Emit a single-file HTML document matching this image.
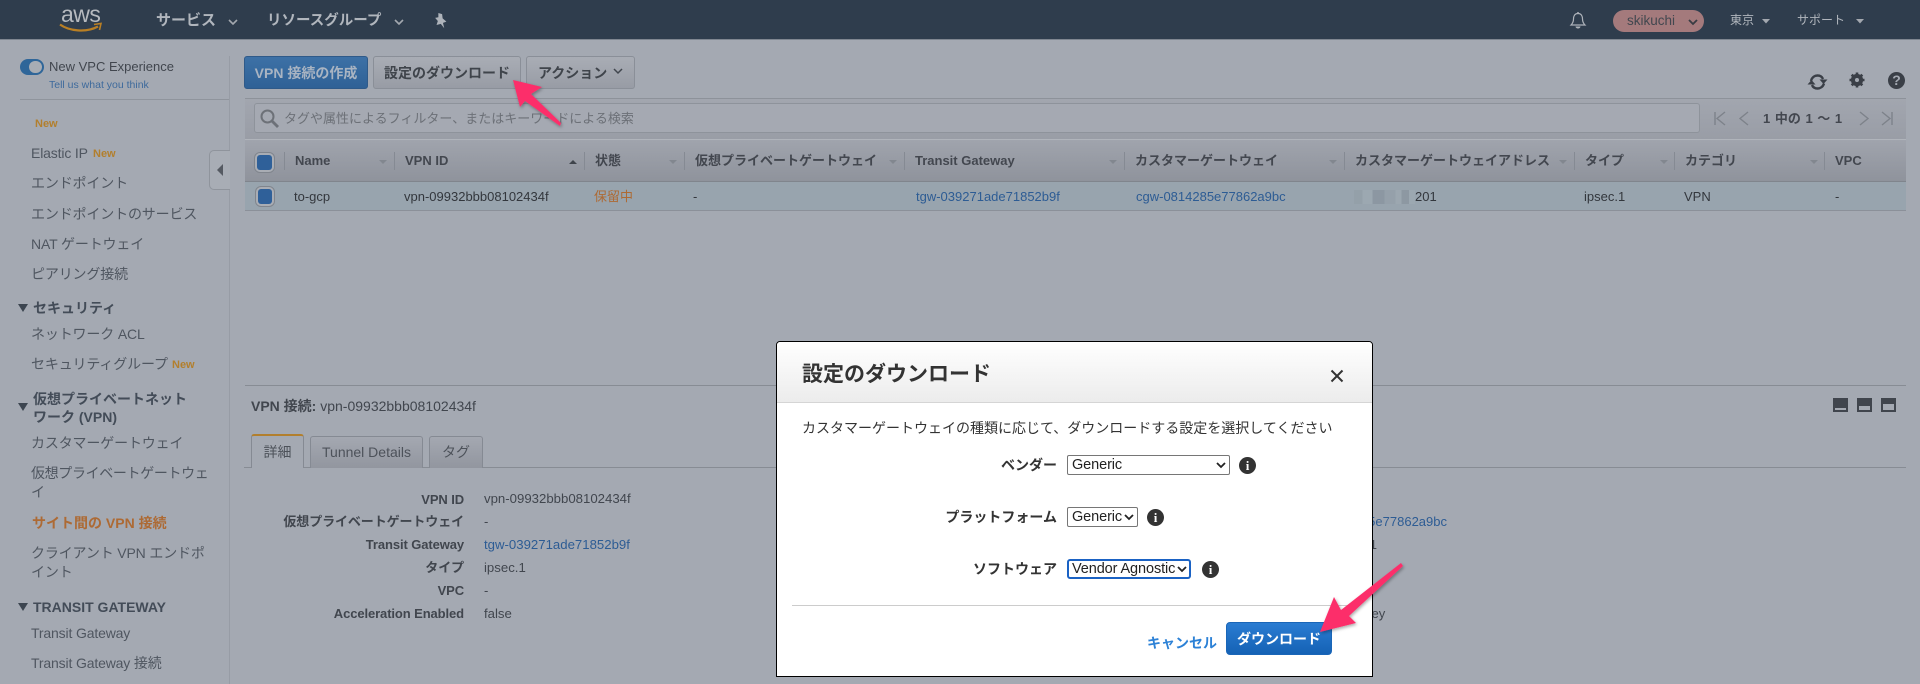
<!DOCTYPE html>
<html lang="ja">
<head>
<meta charset="utf-8">
<title>VPN</title>
<style>
*{box-sizing:border-box}
html,body{margin:0;padding:0;width:1920px;height:684px;overflow:hidden;background:#a4a9b2}
body{position:relative;font-family:"Liberation Sans","Noto Sans CJK JP",sans-serif;font-size:13px;color:#41464e}
.t{position:absolute;white-space:nowrap;line-height:20px;height:20px}
.b{font-weight:700}
.a{position:absolute}
.r{text-align:right;right:1456px;letter-spacing:-.1px}
.side{font-size:14px;color:#4f5660;letter-spacing:-.15px}
.sh{font-size:14px;font-weight:700;color:#434c58}
.new{font-size:11px;font-weight:700;color:#b27f2d}
.th{font-weight:700;color:#43474f}
.sep{position:absolute;top:152px;width:1px;height:18px;background:#858a93}
.car{position:absolute;top:160px;width:0;height:0;border-left:4px solid transparent;border-right:4px solid transparent;border-top:4px solid #82878f}
.td{color:#33373d}
.lnk{color:#2d5c94}
.btn{position:absolute;top:56px;height:33px;border-radius:3px;border:1px solid #8a8f98;background:linear-gradient(#a9adb5,#989ca5);text-align:center;line-height:32px;font-size:14px;font-weight:700;color:#3f444b;white-space:nowrap}
.tri{position:absolute;left:18px;width:0;height:0;border-left:5px solid transparent;border-right:5px solid transparent;border-top:8px solid #3c4550}
.cb{position:absolute;width:15px;height:15px;border-radius:3px;background:#2f6099;box-shadow:0 0 0 2px #a9adb4,0 0 0 3px #80858d}
.tab{position:absolute;border:1px solid #858a93;border-bottom:none;border-radius:3px 3px 0 0;background:linear-gradient(#a4a8b1,#92969f);color:#4d525a;text-align:center;font-size:14px}
.nav{color:#b1b6bd;white-space:nowrap}
.sel{position:absolute;background:#fff;border:1px solid #767676;border-radius:2px;font-size:14.5px;color:#222;line-height:18px;padding-left:4px;white-space:nowrap;overflow:hidden;letter-spacing:-.1px}
.sel svg{position:absolute;right:3px;top:6px}
.info{position:absolute;width:17px;height:17px;border-radius:50%;background:#333;color:#fff;font:700 13px/17px "Liberation Serif",serif;text-align:center}
</style>
</head>
<body>
<!-- navbar -->
<div class="a" style="left:0;top:0;width:1920px;height:40px;background:#2f3d4d;border-bottom:1px solid #7f8690"></div>
<div class="t" style="left:61px;top:1px;font-size:23px;line-height:26px;height:26px;color:#b6babf;letter-spacing:-.5px">aws</div>
<svg class="a" style="left:59px;top:22px" width="44" height="12" viewBox="0 0 44 12"><path d="M1 2.500C10 9 27 11 39 4.500" fill="none" stroke="#b97f24" stroke-width="2.200"/><path d="M35 2.500L42 1.500L40.500 8" fill="none" stroke="#b97f24" stroke-width="1.600"/></svg>
<div class="t nav b" style="left:156px;top:11px;font-size:15px">サービス</div>
<svg class="a" style="left:228px;top:19px" width="10" height="7"><path d="M1 1l4 4 4-4" fill="none" stroke="#a3a8af" stroke-width="1.600"/></svg>
<div class="t nav b" style="left:267px;top:11px;font-size:14.5px">リソースグループ</div>
<svg class="a" style="left:394px;top:19px" width="10" height="7"><path d="M1 1l4 4 4-4" fill="none" stroke="#a3a8af" stroke-width="1.600"/></svg>
<svg class="a" style="left:433px;top:12px" width="15" height="17" viewBox="0 0 14 15"><path d="M5 .5l3.500 1 .5 4 3.500 3-3.200 1.200 1.200 5-3.200-4-4 1 1.200-3.700L2 5l3-.5z" fill="#aeb3ba"/></svg>
<svg class="a" style="left:1569px;top:11px" width="18" height="19" viewBox="0 0 18 19"><path d="M9 2.500c-3.500 0-4.500 3-4.500 5.500 0 3-1 4.500-2.500 6h14c-1.500-1.500-2.500-3-2.500-6 0-2.500-1-5.500-4.500-5.500z" fill="none" stroke="#aeb3ba" stroke-width="1.200"/><circle cx="9" cy="2" r="1" fill="#aeb3ba"/><path d="M6.500 15.500a2.500 2 0 0 0 5 0z" fill="#aeb3ba"/></svg>
<div class="a" style="left:1613px;top:10px;width:91px;height:22px;border-radius:11px;background:#a47a7c"></div>
<div class="t" style="left:1627px;top:11px;font-size:13.5px;color:#42474f">skikuchi</div>
<svg class="a" style="left:1688px;top:19px" width="10" height="7"><path d="M1 1l4 4 4-4" fill="none" stroke="#383c43" stroke-width="1.800"/></svg>
<div class="t nav" style="left:1730px;top:10px;font-size:12px">東京</div>
<svg class="a" style="left:1762px;top:19px" width="8" height="5"><path d="M0 0h8L4 4.500z" fill="#a3a8af"/></svg>
<div class="t nav" style="left:1797px;top:10px;font-size:12px">サポート</div>
<svg class="a" style="left:1856px;top:19px" width="8" height="5"><path d="M0 0h8L4 4.500z" fill="#a3a8af"/></svg>

<!-- sidebar -->
<div class="a" style="left:229px;top:56px;width:1px;height:628px;background:#979ca5"></div>
<div class="a" style="left:20px;top:59px;width:24px;height:16px;border-radius:8px;background:#2f6699"></div>
<div class="a" style="left:29px;top:61px;width:13px;height:12px;border-radius:6px;background:#a8adb4"></div>
<div class="t" style="left:49px;top:57px;font-size:13px;color:#41464e">New VPC Experience</div>
<div class="t" style="left:49px;top:75px;font-size:10.500px;color:#3e6a9c">Tell us what you think</div>
<div class="a" style="left:20px;top:99px;width:209px;height:1px;background:#8f949c"></div>
<div class="t new" style="left:35px;top:114px">New</div>
<div class="t side" style="left:31px;top:143px">Elastic IP</div><div class="t new" style="left:93px;top:144px">New</div>
<div class="t side" style="left:31px;top:173px">エンドポイント</div>
<div class="t side" style="left:31px;top:204px">エンドポイントのサービス</div>
<div class="t side" style="left:31px;top:234px">NAT ゲートウェイ</div>
<div class="t side" style="left:31px;top:264px">ピアリング接続</div>
<div class="tri" style="top:304px"></div><div class="t sh" style="left:33px;top:298px">セキュリティ</div>
<div class="t side" style="left:31px;top:324px">ネットワーク ACL</div>
<div class="t side" style="left:31px;top:354px">セキュリティグループ</div><div class="t new" style="left:172px;top:355px">New</div>
<div class="tri" style="top:403px"></div><div class="t sh" style="left:33px;top:389px">仮想プライベートネット</div>
<div class="t sh" style="left:33px;top:407px">ワーク (VPN)</div>
<div class="t side" style="left:31px;top:433px">カスタマーゲートウェイ</div>
<div class="t side" style="left:31px;top:463px;letter-spacing:-.35px">仮想プライベートゲートウェ</div>
<div class="t side" style="left:31px;top:482px">イ</div>
<div class="t b" style="left:32px;top:513px;font-size:14px;color:#ad6a34">サイト間の VPN 接続</div>
<div class="t side" style="left:31px;top:543px">クライアント VPN エンドポ</div>
<div class="t side" style="left:31px;top:562px">イント</div>
<div class="tri" style="top:603px"></div><div class="t sh" style="left:33px;top:597px">TRANSIT GATEWAY</div>
<div class="t side" style="left:31px;top:623px">Transit Gateway</div>
<div class="t side" style="left:31px;top:653px">Transit Gateway 接続</div>
<div class="a" style="left:209px;top:150px;width:21px;height:40px;background:#a8adb5;border:1px solid #8f949c;border-right:none;border-radius:5px 0 0 5px"></div>
<div class="a" style="left:217px;top:164px;width:0;height:0;border-top:6px solid transparent;border-bottom:6px solid transparent;border-right:6px solid #555a62"></div>

<!-- toolbar -->
<div class="btn" style="left:244px;width:124px;background:linear-gradient(#3d71a6,#2f6196);border-color:#2f5a89;color:#a9b4c2">VPN 接続の作成</div>
<div class="btn" style="left:373px;width:148px">設定のダウンロード</div>
<div class="btn" style="left:526px;width:109px;text-align:left;padding-left:11px">アクション</div>
<svg class="a" style="left:613px;top:68px" width="10" height="7"><path d="M1 1l4 4 4-4" fill="none" stroke="#41464e" stroke-width="1.500"/></svg>
<svg class="a" style="left:1807px;top:74px" width="21" height="16" viewBox="0 0 21 16"><path d="M4 7C5 3 8 1.500 10.500 1.500c2.500 0 4.500 1 5.500 3.500" fill="none" stroke="#3a3f47" stroke-width="2.400"/><path d="M12.500 5.500h8l-4 4.500z" fill="#3a3f47"/><path d="M17 9.500C16 13 13 14.500 10.500 14.500 8 14.500 6 13.500 5 11" fill="none" stroke="#3a3f47" stroke-width="2.400"/><path d="M.5 10.500h8l-4-4.500z" fill="#3a3f47"/></svg>
<svg class="a" style="left:1849px;top:72px" width="16" height="16" viewBox="0 0 16 16"><circle cx="8" cy="8" r="4.500" fill="none" stroke="#3a3f47" stroke-width="3.200"/><path d="M8 .5v15M.5 8h15M2.700 2.700l10.600 10.600M13.300 2.700L2.700 13.300" stroke="#3a3f47" stroke-width="2.600"/><circle cx="8" cy="8" r="2" fill="#a4a9b2"/></svg>
<div class="a" style="left:1888px;top:72px;width:17px;height:17px;border-radius:50%;background:#3a3f47;color:#a4a9b2;font:700 14px/17px 'Liberation Sans',sans-serif;text-align:center">?</div>

<!-- filter row -->
<div class="a" style="left:245px;top:98px;width:1661px;height:42px;background:linear-gradient(#a2a6af,#999da6);border-top:1px solid #8d929a;border-bottom:1px solid #b0b4bb"></div>
<div class="a" style="left:254px;top:103px;width:1446px;height:30px;background:#a5a9b2;border:1px solid #8e939b;border-radius:3px"></div>
<svg class="a" style="left:259px;top:108px" width="21" height="21" viewBox="0 0 21 21"><circle cx="8.500" cy="8.500" r="6" fill="none" stroke="#6d7178" stroke-width="2"/><path d="M13 13l6 6" stroke="#6d7178" stroke-width="2.800"/></svg>
<div class="t" style="left:284px;top:109px;font-size:13px;color:#6c7077">タグや属性によるフィルター、またはキーワードによる検索</div>
<svg class="a" style="left:1713px;top:109px" width="186" height="20" viewBox="0 0 186 20" fill="none" stroke="#7d828a" stroke-width="1.400"><path d="M2 3v13M12 3L4 9.500l8 6.500M35 3l-8 6.500 8 6.500M147 3l8 6.500-8 6.500M169 3l8 6.500-8 6.500M179 3v13"/></svg>
<div class="t b" style="left:1763px;top:109px;font-size:13px;color:#43474f;word-spacing:1px">1 中の 1 〜 1</div>

<!-- table header -->
<div class="a" style="left:245px;top:140px;width:1661px;height:42px;background:linear-gradient(#a0a4ad,#8f939c);border-bottom:1px solid #80858d"></div>
<div class="cb" style="left:257px;top:155px"></div>
<div class="sep" style="left:284px"></div><div class="sep" style="left:394px"></div><div class="sep" style="left:584px"></div><div class="sep" style="left:684px"></div><div class="sep" style="left:904px"></div><div class="sep" style="left:1124px"></div><div class="sep" style="left:1344px"></div><div class="sep" style="left:1574px"></div><div class="sep" style="left:1674px"></div><div class="sep" style="left:1824px"></div>
<div class="car" style="left:379px"></div><div class="car" style="left:569px;border-top:none;border-bottom:4px solid #3f444b"></div><div class="car" style="left:669px"></div><div class="car" style="left:889px"></div><div class="car" style="left:1109px"></div><div class="car" style="left:1329px"></div><div class="car" style="left:1559px"></div><div class="car" style="left:1660px"></div><div class="car" style="left:1810px"></div>
<div class="t th" style="left:295px;top:151px">Name</div>
<div class="t th" style="left:405px;top:151px">VPN ID</div>
<div class="t th" style="left:595px;top:151px">状態</div>
<div class="t th" style="left:695px;top:151px">仮想プライベートゲートウェイ</div>
<div class="t th" style="left:915px;top:151px">Transit Gateway</div>
<div class="t th" style="left:1135px;top:151px">カスタマーゲートウェイ</div>
<div class="t th" style="left:1355px;top:151px">カスタマーゲートウェイアドレス</div>
<div class="t th" style="left:1585px;top:151px">タイプ</div>
<div class="t th" style="left:1685px;top:151px">カテゴリ</div>
<div class="t th" style="left:1835px;top:151px">VPC</div>

<!-- row -->
<div class="a" style="left:245px;top:182px;width:1661px;height:29px;background:#98a4ae;border-bottom:1px solid #8b9099"></div>
<div class="cb" style="left:258px;top:189px;width:14px;height:15px"></div>
<div class="t td" style="left:294px;top:187px">to-gcp</div>
<div class="t td" style="left:404px;top:187px">vpn-09932bbb08102434f</div>
<div class="t" style="left:594px;top:187px;color:#ad6a34">保留中</div>
<div class="t td" style="left:693px;top:187px">-</div>
<div class="t lnk" style="left:916px;top:187px">tgw-039271ade71852b9f</div>
<div class="t lnk" style="left:1136px;top:187px">cgw-0814285e77862a9bc</div>
<div class="a" style="left:1354px;top:190px;width:61px;height:14px;background:linear-gradient(90deg,#94a0a9 0,#94a0a9 14%,#9ca8b1 14%,#9ca8b1 30%,#8c97a2 30%,#8c97a2 50%,#95a0aa 50%,#95a0aa 68%,#9ca7b0 68%,#9ca7b0 78%,#8d98a2 78%,#8d98a2 90%,#9ca8b1 90%)"></div>
<div class="t td" style="left:1415px;top:187px">201</div>
<div class="t td" style="left:1584px;top:187px">ipsec.1</div>
<div class="t td" style="left:1684px;top:187px">VPN</div>
<div class="t td" style="left:1835px;top:187px">-</div>

<!-- bottom pane -->
<div class="a" style="left:245px;top:385px;width:1661px;height:1px;background:#878c94"></div>
<div class="t" style="left:251px;top:396px;font-size:14px;color:#41464e"><span class="b">VPN 接続:</span> vpn-09932bbb08102434f</div>
<div class="a" style="left:1833px;top:398px;width:15px;height:14px;background:#40454d"><div class="a" style="left:2px;top:10px;width:11px;height:2px;background:#a4a9b2"></div></div>
<div class="a" style="left:1857px;top:398px;width:15px;height:14px;background:#40454d"><div class="a" style="left:2px;top:8px;width:11px;height:4px;background:#a4a9b2"></div></div>
<div class="a" style="left:1881px;top:398px;width:15px;height:14px;background:#40454d"><div class="a" style="left:2px;top:6px;width:11px;height:6px;background:#a4a9b2"></div></div>
<div class="a" style="left:244px;top:467px;width:1662px;height:1px;background:#878c94"></div>
<div class="tab" style="left:251px;top:434px;width:53px;height:34px;background:#a4a9b2;border-top:2px solid #b27f2d;line-height:33px">詳細</div>
<div class="tab" style="left:310px;top:436px;width:113px;height:32px;line-height:31px">Tunnel Details</div>
<div class="tab" style="left:429px;top:436px;width:54px;height:32px;line-height:30px">タグ</div>
<div class="t b r" style="top:490px">VPN ID</div><div class="t" style="left:484px;top:489px;font-size:13.2px">vpn-09932bbb08102434f</div>
<div class="t b r" style="top:512px">仮想プライベートゲートウェイ</div><div class="t" style="left:484px;top:512px">-</div>
<div class="t b r" style="top:535px">Transit Gateway</div><div class="t lnk" style="left:484px;top:535px;font-size:13.2px">tgw-039271ade71852b9f</div>
<div class="t b r" style="top:558px">タイプ</div><div class="t" style="left:484px;top:558px;font-size:13.2px">ipsec.1</div>
<div class="t b r" style="top:581px">VPC</div><div class="t" style="left:484px;top:581px">-</div>
<div class="t b r" style="top:604px">Acceleration Enabled</div><div class="t" style="left:484px;top:604px;font-size:13.2px">false</div>
<div class="t lnk" style="right:473px;top:512px">cgw-0814285e77862a9bc</div>
<div class="t" style="left:1351px;top:535px">ap-1</div>
<div class="t" style="left:1365px;top:604px">key</div>

<!-- modal -->
<div class="a" style="left:776px;top:341px;width:597px;height:336px;background:#fff;border:1px solid #000;border-radius:4px 4px 0 0;overflow:hidden">
  <div class="a" style="left:0;top:0;width:100%;height:61px;background:linear-gradient(#fff,#ececec);border-bottom:1px solid #d5d5d5"></div>
</div>
<div class="t b" style="left:802px;top:362px;font-size:21px;line-height:26px;height:26px;color:#333">設定のダウンロード</div>
<svg class="a" style="left:1330px;top:369px" width="14" height="14"><path d="M1.500 1.500l11 11M12.500 1.500l-11 11" stroke="#333" stroke-width="2"/></svg>
<div class="t" style="left:802px;top:418px;font-size:14px;color:#333">カスタマーゲートウェイの種類に応じて、ダウンロードする設定を選択してください</div>
<div class="t b" style="right:863px;top:455px;font-size:14px;color:#333">ベンダー</div>
<div class="sel" style="left:1067px;top:455px;width:163px;height:20px">Generic<svg width="10" height="7"><path d="M1 1l4 4 4-4" fill="none" stroke="#222" stroke-width="1.800"/></svg></div>
<div class="info" style="left:1239px;top:457px">i</div>
<div class="t b" style="right:863px;top:507px;font-size:14px;color:#333">プラットフォーム</div>
<div class="sel" style="left:1067px;top:507px;width:71px;height:20px">Generic<svg width="10" height="7"><path d="M1 1l4 4 4-4" fill="none" stroke="#222" stroke-width="1.800"/></svg></div>
<div class="info" style="left:1147px;top:509px">i</div>
<div class="t b" style="right:863px;top:559px;font-size:14px;color:#333">ソフトウェア</div>
<div class="sel" style="left:1067px;top:559px;width:124px;height:20px;border:2px solid #1a62c4;border-radius:3px;padding-left:3px;line-height:16px">Vendor Agnostic<svg width="10" height="7" style="right:2px;top:5px"><path d="M1 1l4 4 4-4" fill="none" stroke="#222" stroke-width="1.800"/></svg></div>
<div class="info" style="left:1202px;top:561px">i</div>
<div class="a" style="left:792px;top:605px;width:565px;height:1px;background:#ccc"></div>
<div class="t b" style="left:1147px;top:633px;font-size:14px;color:#2c81d6">キャンセル</div>
<div class="a" style="left:1226px;top:622px;width:106px;height:33px;border-radius:4px;background:linear-gradient(#2a7cd2,#1562b5);border:1px solid #1a66b8;color:#fff;font-weight:700;font-size:14px;line-height:33px;text-align:center">ダウンロード</div>

<!-- arrows -->
<svg class="a" style="left:0;top:0" width="1920" height="684">
<defs><filter id="s" x="-30%" y="-30%" width="160%" height="160%"><feDropShadow dx="1" dy="1.500" stdDeviation="1.500" flood-color="#000" flood-opacity=".35"/></filter></defs>
<path d="M513 80L542 87L531 94L561 123L560 126L525 101L520 107Z" fill="#fc2f6b" filter="url(#s)"/>
<path d="M1320 632L1334 597L1341 610L1401 563L1403 566L1349 616L1356 623Z" fill="#fc2f6b" filter="url(#s)"/>
</svg>
</body>
</html>
